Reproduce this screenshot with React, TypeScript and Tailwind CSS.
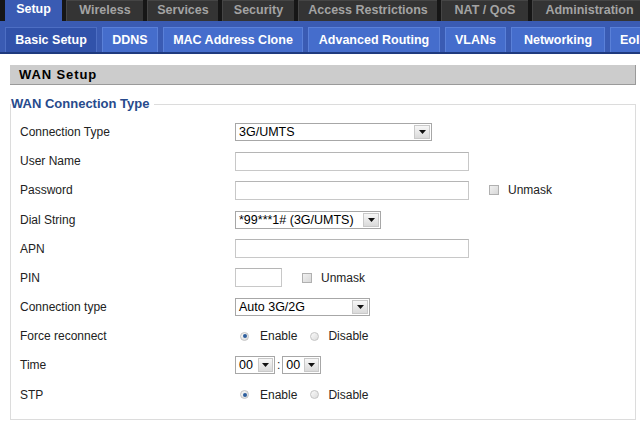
import React from "react";

const Arrow = () => (
  <svg width="7" height="4" viewBox="0 0 7 4">
    <polygon points="0,0 7,0 3.5,4" fill="#111" />
  </svg>
);

const Select = ({ w, text, aw = 16 }: { w: number; text: string; aw?: number }) => (
  <div
    className="flex h-[18px] border border-[#a7a7a7] bg-white items-stretch"
    style={{ width: w }}
  >
    <div className="flex-1 pl-[3px] text-[12.5px] leading-[16px] text-black whitespace-nowrap overflow-hidden">{text}</div>
    <div
      className="m-[1px] flex items-center justify-center border border-[#c9c9c9] bg-gradient-to-b from-[#f7f7f7] to-[#dadada]"
      style={{ width: aw }}
    >
      <Arrow />
    </div>
  </div>
);

const Input = ({ w }: { w: number }) => (
  <div className="h-[19px] border border-[#c8c8c8] border-t-[#b5b5b5] bg-white" style={{ width: w }} />
);

const Check = () => (
  <div className="w-[10px] h-[10px] border border-[#b0b0b0] bg-gradient-to-br from-[#f0f0f0] to-[#d8d8d8]" />
);

const Radio = ({ on }: { on?: boolean }) => (
  <div className="w-[9px] h-[9px] rounded-full border border-[#c4c4c4] bg-gradient-to-br from-[#fafafa] to-[#dcdcdc] flex items-center justify-center">
    {on && <div className="w-[4px] h-[4px] rounded-full bg-[#2e5f9e]" />}
  </div>
);

const Row = ({ label, children }: { label: string; children?: React.ReactNode }) => (
  <div className="flex items-center h-[29.2px] pl-[9px]">
    <div className="w-[215px] shrink-0 text-[12px] text-[#222]">{label}</div>
    <div className="flex items-center text-[12px] text-[#222]">{children}</div>
  </div>
);

const topTabs: [string, number][] = [
  ["Wireless", 77],
  ["Services", 71],
  ["Security", 72],
  ["Access Restrictions", 139],
  ["NAT / QoS", 87],
  ["Administration", 114],
];

const subTabs: [string, number][] = [
  ["DDNS", 56],
  ["MAC Address Clone", 140],
  ["Advanced Routing", 132],
  ["VLANs", 61],
  ["Networking", 94],
];

export default function App() {
  return (
    <div
      className="w-[640px] h-[428px] overflow-hidden bg-white"
      style={{ fontFamily: '"Liberation Sans", Arial, sans-serif' }}
    >
      {/* top tabs */}
      <div className="flex h-[21px] bg-[#161616] pl-[5px] gap-[4px] overflow-hidden">
        <div className="w-[57px] shrink-0 bg-[#3a5bb3] flex items-center justify-center text-white font-bold text-[12.5px] pb-[2px]">
          Setup
        </div>
        {topTabs.map(([t, w]) => (
          <div
            key={t}
            className="shrink-0 bg-[#343434] border-t border-l border-[#454545] flex items-center justify-center text-[#a3a3a3] font-bold text-[12.5px] pb-[1px] whitespace-nowrap"
            style={{ width: w }}
          >
            {t}
          </div>
        ))}
      </div>
      {/* sub tabs */}
      <div className="flex h-[33px] bg-[#3a5bb3] pl-[5px] pt-[6px] gap-[5px] border-b-[2px] border-[#1f3a7e] overflow-hidden">
        <div className="w-[92px] shrink-0 bg-[#3152aa] border-t border-l border-r border-[#4d6ec3] flex items-center justify-center text-white font-bold text-[12.5px] whitespace-nowrap">
          Basic Setup
        </div>
        {subTabs.map(([t, w]) => (
          <div
            key={t}
            className="shrink-0 bg-[#456dcc] border-t border-l border-r border-[#5a80d8] flex items-center justify-center text-white font-bold text-[12.5px] whitespace-nowrap"
            style={{ width: w }}
          >
            {t}
          </div>
        ))}
        <div className="shrink-0 w-[60px] bg-[#456dcc] border-t border-l border-[#5a80d8] flex items-center pl-[9px] text-white font-bold text-[12.5px] whitespace-nowrap">
          EoIP
        </div>
      </div>

      {/* section bar */}
      <div className="mt-[11px] ml-[10px] w-[626px] h-[20px] bg-[#cccccc] border-b border-r border-[#9a9a9a] flex items-center pl-[9px]">
        <span className="font-bold text-[13px] tracking-[0.9px] text-black">WAN Setup</span>
      </div>

      {/* fieldset */}
      <fieldset className="mt-[11px] ml-[10px] w-[626px] border border-[#dcdcdc] p-0 pb-[9.6px]">
        <legend className="font-bold text-[13px] leading-[16px] text-[#274a8c] pr-[5px] p-0">
          WAN Connection Type
        </legend>
        <div className="pt-[5.4px]">
          <Row label="Connection Type">
            <Select w={197} text="3G/UMTS" />
          </Row>
          <Row label="User Name">
            <Input w={234} />
          </Row>
          <Row label="Password">
            <Input w={234} />
            <div className="ml-[20px]"><Check /></div>
            <span className="ml-[9px]">Unmask</span>
          </Row>
          <Row label="Dial String">
            <Select w={146} text="*99***1# (3G/UMTS)" aw={16} />
          </Row>
          <Row label="APN">
            <Input w={234} />
          </Row>
          <Row label="PIN">
            <Input w={47} />
            <div className="ml-[20px]"><Check /></div>
            <span className="ml-[9px]">Unmask</span>
          </Row>
          <Row label="Connection type">
            <Select w={135} text="Auto 3G/2G" />
          </Row>
          <Row label="Force reconnect">
            <div className="ml-[5px]"><Radio on /></div>
            <span className="ml-[11px]">Enable</span>
            <div className="ml-[13px]"><Radio /></div>
            <span className="ml-[9px]">Disable</span>
          </Row>
          <Row label="Time">
            <Select w={40} text="00" aw={15} />
            <span className="mx-[2px]">:</span>
            <Select w={39} text="00" aw={15} />
          </Row>
          <Row label="STP">
            <div className="ml-[5px]"><Radio on /></div>
            <span className="ml-[11px]">Enable</span>
            <div className="ml-[13px]"><Radio /></div>
            <span className="ml-[9px]">Disable</span>
          </Row>
        </div>
      </fieldset>
    </div>
  );
}
